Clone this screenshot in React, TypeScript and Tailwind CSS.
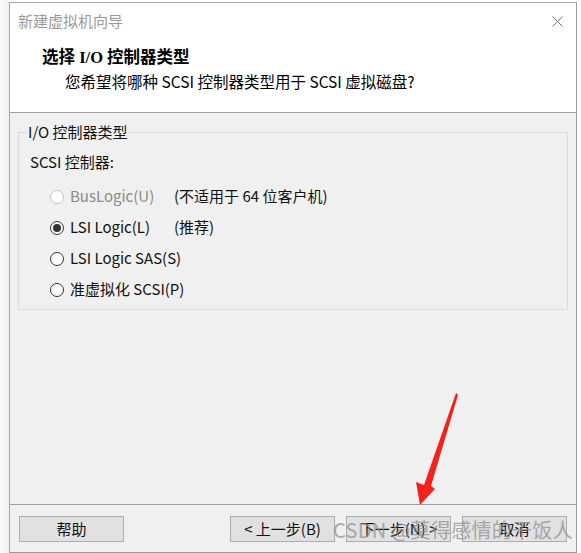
const font = "font-['Noto_Sans_CJK_SC',sans-serif]";

type Opt = { label: string; note?: string; checked?: boolean; disabled?: boolean };

const options: Opt[] = [
  { label: "BusLogic(U)", note: "(不适用于 64 位客户机)", disabled: true },
  { label: "LSI Logic(L)", note: "(推荐)", checked: true },
  { label: "LSI Logic SAS(S)" },
  { label: "准虚拟化 SCSI(P)" },
];

function Radio({ checked, disabled }: { checked?: boolean; disabled?: boolean }) {
  return (
    <span
      className={`flex h-[14px] w-[14px] shrink-0 items-center justify-center rounded-full border bg-white ${
        disabled ? "border-[#c4c4c4]" : "border-[#333333]"
      }`}
    >
      {checked && <span className="h-[8px] w-[8px] rounded-full bg-[#333333]" />}
    </span>
  );
}

function Button({ children }: { children: React.ReactNode }) {
  return (
    <div className="flex h-[26px] w-[105px] items-center justify-center whitespace-nowrap border border-[#adadad] bg-[#e1e1e1] text-[15px] text-[#111]">
      {children}
    </div>
  );
}

export default function App() {
  return (
    <div className={`relative h-[553px] w-[581px] overflow-hidden bg-white ${font}`}>
      <div className="flex h-full">
        {/* shadow strip */}
        <div className="w-[9px] bg-gradient-to-r from-[#fdfdfd] to-[#efefef]" />

        {/* dialog */}
        <div className="mt-[2px] flex h-[551px] w-[568px] flex-col border border-[#a8a8a8] border-r-[#9a9a9a] border-b-[#9a9a9a]">
          {/* HEADER */}
          <div className="h-[109px] bg-white pt-[8px]">
            <div className="flex h-5 items-center justify-between pl-[8px] pr-[13px]">
              <span className="text-[15px] leading-5 text-[#9a9a9a]">新建虚拟机向导</span>
              <svg width="11" height="11" viewBox="0 0 11 11">
                <path d="M0.5 0.5 L10.5 10.5 M10.5 0.5 L0.5 10.5" stroke="#777" strokeWidth="1" />
              </svg>
            </div>
            <div className="mt-[17px] pl-[32px] font-['Liberation_Serif','Noto_Sans_CJK_SC',serif] text-[16.5px] font-bold leading-5 text-black">
              选择 I/O 控制器类型
            </div>
            <div className="mt-[3px] whitespace-nowrap pl-[55px] text-[15.5px] leading-5 text-black">
              您希望将哪种 SCSI 控制器类型用于 SCSI 虚拟磁盘?
            </div>
          </div>

          {/* BODY */}
          <div className="h-[392px] border-t border-[#a0a0a0] bg-[#f0f0f0] px-[8px] pt-[9px]">
            <fieldset className="border border-[#dcdcdc] pb-[4px]">
              <legend className="ml-[8px] px-[1px] text-[15px] leading-5 text-[#111]">I/O 控制器类型</legend>
              <div className="mt-[10px] pl-[11px] text-[15px] leading-5 text-[#111]">SCSI 控制器:</div>
              <div className="mt-[9px] flex flex-col">
                {options.map((o) => (
                  <div key={o.label} className="flex h-[31px] items-center whitespace-nowrap pl-[31px] text-[15px]">
                    <Radio checked={o.checked} disabled={o.disabled} />
                    <span className={`ml-[6px] w-[104px] shrink-0 ${o.disabled ? "text-[#8a8a8a]" : "text-[#111]"}`}>
                      {o.label}
                    </span>
                    {o.note && <span className="text-[#111]">{o.note}</span>}
                  </div>
                ))}
              </div>
            </fieldset>
          </div>

          {/* FOOTER */}
          <div className="flex flex-1 items-start justify-between border-t border-[#a0a0a0] bg-[#f0f0f0] px-[9px] pt-[11px]">
            <Button>帮助</Button>
            <div className="flex gap-[11px]">
              <Button>&lt; 上一步(B)</Button>
              <Button>下一步(N) &gt;</Button>
              <Button>取消</Button>
            </div>
          </div>
        </div>
      </div>

      {/* watermark */}
      <div className="absolute left-[333px] top-[516px] whitespace-nowrap text-[20px] leading-7 tracking-[0.3px] text-[#8c8c8c] opacity-70">
        CSDN @莫得感情的干饭人
      </div>

      {/* red arrow annotation */}
      <svg className="absolute left-0 top-0" width="581" height="553" viewBox="0 0 581 553">
        <polygon
          points="456,393 458,395 431,486 435,489 420,505 416,482 424,485"
          fill="#f5221b"
        />
      </svg>
    </div>
  );
}
